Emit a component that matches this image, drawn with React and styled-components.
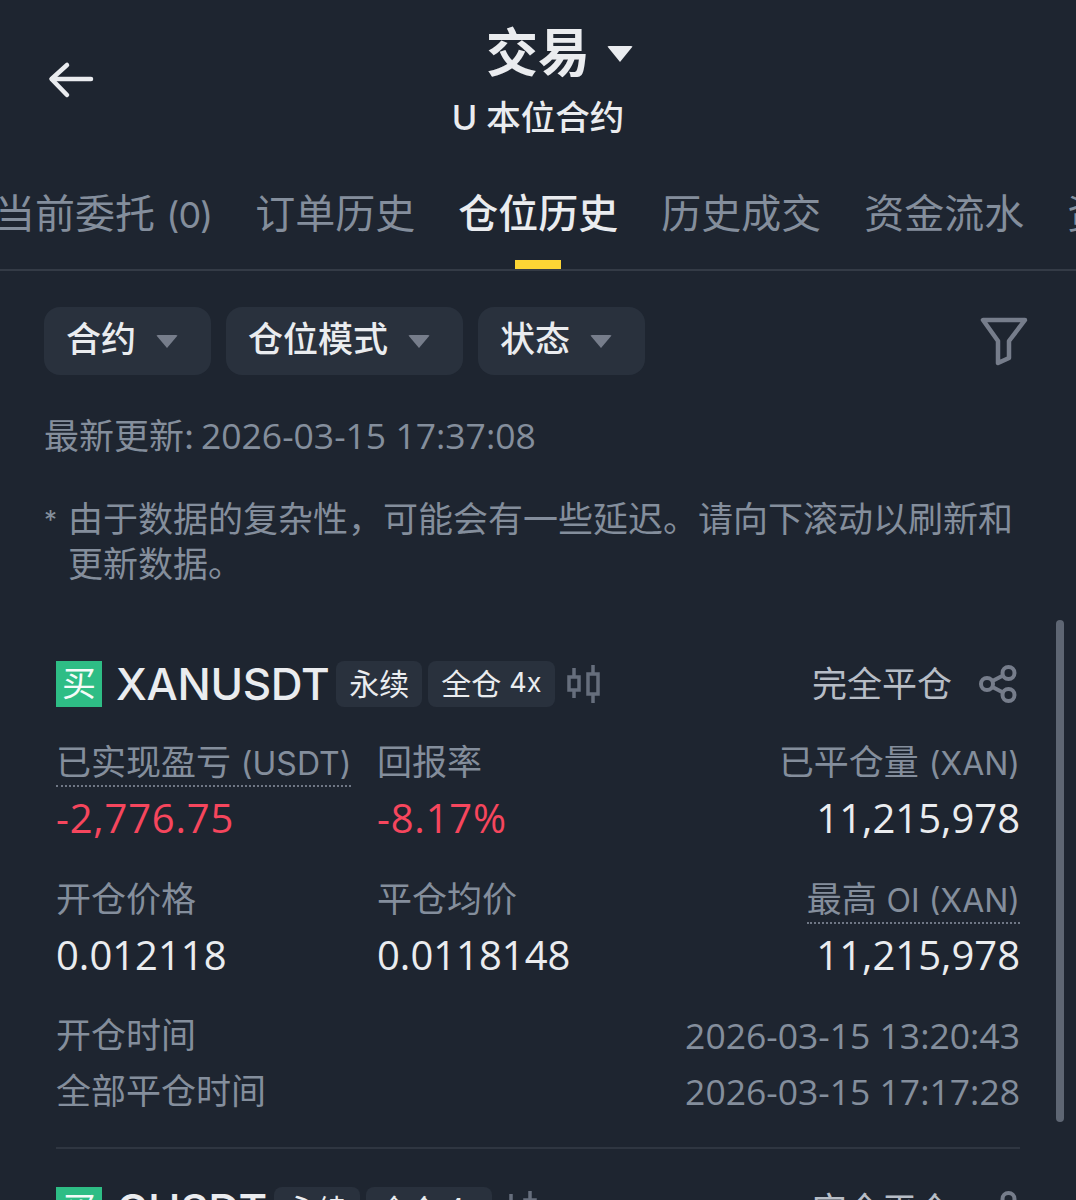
import React from "react";
import styled, { createGlobalStyle } from "styled-components";

const FONT = `"Inter", "Noto Sans CJK SC", "Noto Sans", sans-serif`;
const NUM_FONT = `"Open Sans", "Noto Sans CJK SC", sans-serif`;

const Global = createGlobalStyle`
  html, body { margin: 0; padding: 0; background: #1e2530; }
  body { font-family: ${FONT}; }
  * { box-sizing: border-box; }
`;

const Page = styled.div`
  position: relative;
  width: 1076px;
  height: 1200px;
  overflow: hidden;
  background: #1e2530;
  color: #eaecef;
`;

const Header = styled.header`
  position: relative;
  height: 163px;
  padding-top: 23px;
  display: flex;
  flex-direction: column;
  align-items: center;
`;

const BackButton = styled.div`
  position: absolute;
  left: 48px;
  top: 60px;
  line-height: 0;
`;

const TitleRow = styled.div`
  display: flex;
  align-items: center;
  gap: 17px;
  height: 62px;
  margin-left: 43px;
`;

const Title = styled.h1`
  margin: 0;
  font-size: 52px;
  line-height: 62px;
  font-weight: 700;
  color: #eaecef;
`;

const TitleCaret = styled.span`
  width: 0;
  height: 0;
  border-left: 13px solid transparent;
  border-right: 13px solid transparent;
  border-top: 16px solid #eaecef;
  border-radius: 2px;
`;

const Subtitle = styled.div`
  margin-top: 8px;
  font-size: 34.5px;
  line-height: 50px;
  font-weight: 500;
  color: #eaecef;
`;

const Tabs = styled.nav`
  height: 108px;
  border-bottom: 2px solid #343b46;
  overflow: hidden;
  display: flex;
  gap: 43px;
  margin-left: -5px;
  white-space: nowrap;
`;

const Tab = styled.div`
  position: relative;
  flex: none;
  height: 100%;
  padding-top: 20px;
  font-size: 40px;
  line-height: 62px;
  font-weight: ${(p) => (p.$active ? 500 : 400)};
  color: ${(p) => (p.$active ? "#eaecef" : "#848e9c")};
  ${(p) =>
    p.$active &&
    `&::after {
      content: "";
      position: absolute;
      left: 57px;
      bottom: 0;
      width: 46px;
      height: 9px;
      background: #fcd535;
    }`}
`;

const TabCount = styled.span`
  font-size: 36px;
  letter-spacing: -1px;
`;

const Filters = styled.div`
  display: flex;
  align-items: center;
  gap: 15px;
  padding: 36px 48px 0 44px;
`;

const Chip = styled.div`
  height: 68px;
  padding: 0 33px 0 22px;
  border-radius: 16px;
  background: #29313d;
  display: flex;
  align-items: center;
  gap: 20px;
  font-size: 35px;
  font-weight: 500;
  color: #eaecef;
`;

const ChipText = styled.span`
  margin-top: -10px;
`;

const ChipCaret = styled.span`
  width: 0;
  height: 0;
  border-left: 11px solid transparent;
  border-right: 11px solid transparent;
  border-top: 13px solid #767d8b;
  border-radius: 2px;
`;

const FilterIcon = styled.div`
  margin-left: auto;
  line-height: 0;
`;

const Updated = styled.div`
  margin: 35px 0 0 44px;
  font-size: 35px;
  line-height: 50px;
  color: #848e9c;
`;

const UpdatedStamp = styled.span`
  margin-left: -3px;
  font-family: ${NUM_FONT};
  font-size: 35.500px;
`;

const Note = styled.div`
  display: flex;
  margin: 36px 40px 0 44px;
  font-size: 35px;
  line-height: 45px;
  color: #848e9c;
`;

const NoteMark = styled.span`
  flex: 0 0 24px;
  font-size: 26px;
`;

const Card = styled.section`
  margin: 0 56px;
  padding-top: 30px;
`;

const List = styled.div`
  margin-top: 44px;
`;

const Divider = styled.div`
  height: 2px;
  background: #2f3641;
  margin: 28px 0 8px;
`;

const CardHead = styled.div`
  display: flex;
  align-items: center;
  height: 46px;
`;

const SideBadge = styled.span`
  width: 46px;
  height: 46px;
  padding-bottom: 5px;
  background: #2ebd85;
  color: #f4fbf8;
  font-size: 34px;
  font-weight: 400;
  display: flex;
  align-items: center;
  justify-content: center;
`;

const Symbol = styled.span`
  margin-left: 14px;
  font-size: 44px;
  font-weight: 500;
  letter-spacing: -0.3px;
  color: #eaecef;
`;

const Tag = styled.span`
  height: 46px;
  margin-left: ${(p) => p.$gap}px;
  padding: 0 13px 4px;
  border-radius: 8px;
  background: #29313d;
  display: flex;
  align-items: center;
  gap: 8px;
  font-size: 30px;
  color: #eaecef;
`;

const TagLatin = styled.span`
  font-size: 27px;
`;

const Candles = styled.span`
  margin-left: 11px;
  line-height: 0;
`;

const CloseLabel = styled.span`
  margin-left: auto;
  margin-top: -5px;
  font-size: 35px;
  color: #b7bdc6;
`;

const Share = styled.span`
  margin-left: 27px;
  margin-right: 3px;
  line-height: 0;
`;

const Metrics = styled.div`
  display: grid;
  grid-template-columns: 321px 1fr auto;
  row-gap: 27px;
  margin-top: 28px;
`;

const Metric = styled.div`
  display: flex;
  flex-direction: column;
  align-items: ${(p) => (p.$right ? "flex-end" : "flex-start")};
`;

const Label = styled.span`
  height: 52px;
  font-size: 35px;
  line-height: 54px;
  color: #848e9c;
  white-space: nowrap;
  ${(p) => p.$dotted && "border-bottom: 2px dotted #6f7785;"}
`;

const LabelLatin = styled.span`
  font-size: 32px;
`;

const Value = styled.span`
  margin-top: 4px;
  height: 54px;
  font-family: ${NUM_FONT};
  font-size: 40px;
  line-height: 54px;
  letter-spacing: ${(p) => (p.$loss ? "0.8px" : "0")};
  color: ${(p) => (p.$loss ? "#f6465d" : "#eaecef")};
`;

const TimeRow = styled.div`
  display: flex;
  justify-content: space-between;
  font-size: 35px;
  line-height: 55.500px;
  color: #848e9c;
`;

const TimeValue = styled.span`
  font-family: ${NUM_FONT};
  font-size: 35.500px;
`;

const Times = styled.div`
  margin-top: 26px;
`;

const Scrollbar = styled.div`
  position: absolute;
  right: 12px;
  top: 620px;
  width: 8px;
  height: 502px;
  border-radius: 4px;
  background: #5e6673;
`;

const Back = () => (
  <svg width="46" height="40" viewBox="0 0 46 40" fill="none" stroke="#eaecef" strokeWidth="4.500" strokeLinecap="round" strokeLinejoin="round">
    <path d="M43 19H4" />
    <path d="M19 5L3.500 19 19 35" />
  </svg>
);

const Funnel = () => (
  <svg width="48" height="50" viewBox="0 0 48 50" fill="none" stroke="#767d8b" strokeWidth="4.500" strokeLinejoin="round">
    <path d="M3 4h42L29 25v17l-11 5V25z" />
  </svg>
);

const CandleIcon = () => (
  <svg width="36" height="40" viewBox="0 0 36 40" fill="none" stroke="#666e7c" strokeWidth="3.500">
    <rect x="3" y="13" width="10" height="13" />
    <path d="M8 4v9M8 26v8" />
    <rect x="22" y="10" width="10" height="20" />
    <path d="M27 1v9M27 30v9" />
  </svg>
);

const ShareIcon = () => (
  <svg width="38" height="38" viewBox="0 0 38 38" fill="none" stroke="#767d8b" strokeWidth="4">
    <circle cx="29.500" cy="8" r="6" />
    <circle cx="8" cy="19" r="6" />
    <circle cx="29.500" cy="30" r="6" />
    <path d="M13.500 16L24 10.500M13.500 22L24 27.500" />
  </svg>
);

const CardHeader = ({ symbol }) => (
  <CardHead>
    <SideBadge>买</SideBadge>
    <Symbol>{symbol}</Symbol>
    <Tag $gap={7}>永续</Tag>
    <Tag $gap={6}>
      全仓 <TagLatin>4x</TagLatin>
    </Tag>
    <Candles>
      <CandleIcon />
    </Candles>
    <CloseLabel>完全平仓</CloseLabel>
    <Share>
      <ShareIcon />
    </Share>
  </CardHead>
);

export default function App() {
  return (
    <Page>
      <Global />
      <Header>
        <BackButton>
          <Back />
        </BackButton>
        <TitleRow>
          <Title>交易</Title>
          <TitleCaret />
        </TitleRow>
        <Subtitle>U 本位合约</Subtitle>
      </Header>
      <Tabs>
        <Tab>
          当前委托 <TabCount>(0)</TabCount>
        </Tab>
        <Tab>订单历史</Tab>
        <Tab $active>仓位历史</Tab>
        <Tab>历史成交</Tab>
        <Tab>资金流水</Tab>
        <Tab>资金费用</Tab>
      </Tabs>
      <Filters>
        <Chip>
          <ChipText>合约</ChipText>
          <ChipCaret />
        </Chip>
        <Chip>
          <ChipText>仓位模式</ChipText>
          <ChipCaret />
        </Chip>
        <Chip>
          <ChipText>状态</ChipText>
          <ChipCaret />
        </Chip>
        <FilterIcon>
          <Funnel />
        </FilterIcon>
      </Filters>
      <Updated>
        最新更新: <UpdatedStamp>2026-03-15 17:37:08</UpdatedStamp>
      </Updated>
      <Note>
        <NoteMark>*</NoteMark>
        <span>由于数据的复杂性，可能会有一些延迟。请向下滚动以刷新和更新数据。</span>
      </Note>
      <List>
        <Card>
          <CardHeader symbol="XANUSDT" />
          <Metrics>
            <Metric>
              <Label $dotted>
                已实现盈亏 <LabelLatin>(USDT)</LabelLatin>
              </Label>
              <Value $loss>-2,776.75</Value>
            </Metric>
            <Metric>
              <Label>回报率</Label>
              <Value $loss>-8.17%</Value>
            </Metric>
            <Metric $right>
              <Label>
                已平仓量 <LabelLatin>(XAN)</LabelLatin>
              </Label>
              <Value>11,215,978</Value>
            </Metric>
            <Metric>
              <Label>开仓价格</Label>
              <Value>0.012118</Value>
            </Metric>
            <Metric>
              <Label>平仓均价</Label>
              <Value>0.0118148</Value>
            </Metric>
            <Metric $right>
              <Label $dotted>
                最高 <LabelLatin>OI (XAN)</LabelLatin>
              </Label>
              <Value>11,215,978</Value>
            </Metric>
          </Metrics>
          <Times>
            <TimeRow>
              <span>开仓时间</span>
              <TimeValue>2026-03-15 13:20:43</TimeValue>
            </TimeRow>
            <TimeRow>
              <span>全部平仓时间</span>
              <TimeValue>2026-03-15 17:17:28</TimeValue>
            </TimeRow>
          </Times>
          <Divider />
        </Card>
        <Card>
          <CardHeader symbol="CUSDT" />
        </Card>
      </List>
      <Scrollbar />
    </Page>
  );
}
